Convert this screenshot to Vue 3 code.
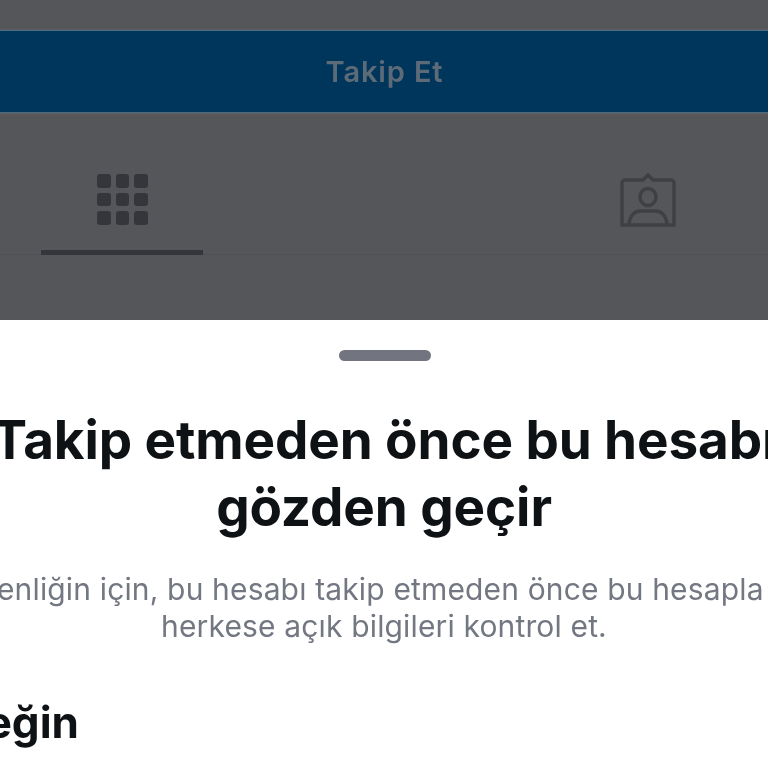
<script setup>
const cells = Array.from({ length: 9 }, (_, i) => i)
</script>

<template>
  <div class="screen">
    <div class="backdrop">
      <div class="top-gap"></div>
      <div class="follow"><span class="follow-label">Takip Et</span></div>
      <div class="tabs">
        <div class="tab active">
          <div class="grid-icon">
            <span v-for="c in cells" :key="c" class="cell"></span>
          </div>
        </div>
        <div class="tab">
          <svg class="tag-icon" width="58" height="56" viewBox="0 0 58 56" fill="none" stroke="#3e4044" stroke-width="3.4">
            <path d="M19 8H6a3 3 0 0 0-3 3V53h52V11a3 3 0 0 0-3-3H39" />
            <path d="M19 8h5l5-5 5 5h5" />
            <ellipse cx="29" cy="25" rx="8" ry="8.5" />
            <path d="M10 52c1-9 6-13 11-13h16c5 0 10 4 11 13" />
          </svg>
        </div>
      </div>
    </div>
    <div class="sheet">
      <div class="handle"></div>
      <h1 class="title">
        <span class="line">Takip etmeden önce bu hesabı</span>
        <span class="line">gözden geçir</span>
      </h1>
      <div class="desc">
        <span class="line">Güvenliğin için, bu hesabı takip etmeden önce bu hesapla ilgili</span>
        <span class="line">herkese açık bilgileri kontrol et.</span>
      </div>
      <div class="example"><span class="soft">Örneğin</span></div>
    </div>
  </div>
</template>

<style>
html, body { margin: 0; background: #fff; }
</style>

<style scoped>
.screen {
  width: 768px;
  height: 768px;
  overflow: hidden;
  font-family: Inter, "Liberation Sans", sans-serif;
  background: #fff;
}
.backdrop {
  height: 320px;
  background: #55565a;
  display: flex;
  flex-direction: column;
}
.top-gap {
  height: 31px;
  flex: none;
  box-shadow: inset 0 -3px 2px -1px #5f5c5b;
}
.follow {
  height: 81px;
  flex: none;
  background: #00365b;
  box-shadow: 0 -1px 1px #4a6a84, 0 1px 1px #4a6a84, 0 3px 2px #5f5c5b;
  display: flex;
  align-items: center;
  justify-content: center;
}
.follow-label {
  color: #5d6b78;
  font-size: 29px;
  font-weight: 600;
  letter-spacing: 0.85px;
  margin-left: 1px;
  filter: blur(0.6px);
}
.tabs {
  height: 143px;
  flex: none;
  box-sizing: border-box;
  padding-left: 41px;
  display: flex;
  justify-content: space-between;
  border-bottom: 1px solid #4f5054;
}
.tab {
  display: flex;
  box-sizing: border-box;
  height: 143px;
}
.tab.active {
  width: 162px;
  justify-content: center;
  padding: 62px 0 0 1px;
  border-bottom: 5px solid #35363b;
}
.tab:last-child {
  padding: 60px 91px 0 0;
}
.grid-icon {
  width: 51px;
  height: 51px;
  display: grid;
  grid-template-columns: repeat(3, 1fr);
  grid-template-rows: repeat(3, 1fr);
  gap: 5px;
  filter: blur(0.6px);
}
.cell {
  background: #35363b;
  border-radius: 3px;
}
.tag-icon {
  display: block;
  filter: blur(0.6px);
}
.sheet {
  height: 448px;
  display: flex;
  flex-direction: column;
  align-items: center;
}
.handle {
  width: 92px;
  height: 11px;
  margin: 30px 0 0 1px;
  border-radius: 6px;
  background: #727480;
  flex: none;
}
.line {
  display: block;
  white-space: nowrap;
  text-align: center;
  filter: blur(0.35px);
}
.soft {
  filter: blur(0.35px);
}
.title {
  margin: 46px 0 0;
  width: 768px;
  display: flex;
  flex-direction: column;
  align-items: center;
  font-size: 53px;
  line-height: 67px;
  font-weight: 700;
  letter-spacing: -0.1px;
  color: #0f1215;
}
.desc {
  margin-top: 30px;
  width: 768px;
  display: flex;
  flex-direction: column;
  align-items: center;
  font-size: 30px;
  line-height: 37px;
  letter-spacing: 0.15px;
  color: #737781;
}
.example {
  align-self: flex-start;
  width: 79px;
  display: flex;
  justify-content: flex-end;
  margin-top: 51px;
  font-size: 44px;
  line-height: 52px;
  font-weight: 700;
  color: #0f1215;
  white-space: nowrap;
}
</style>
